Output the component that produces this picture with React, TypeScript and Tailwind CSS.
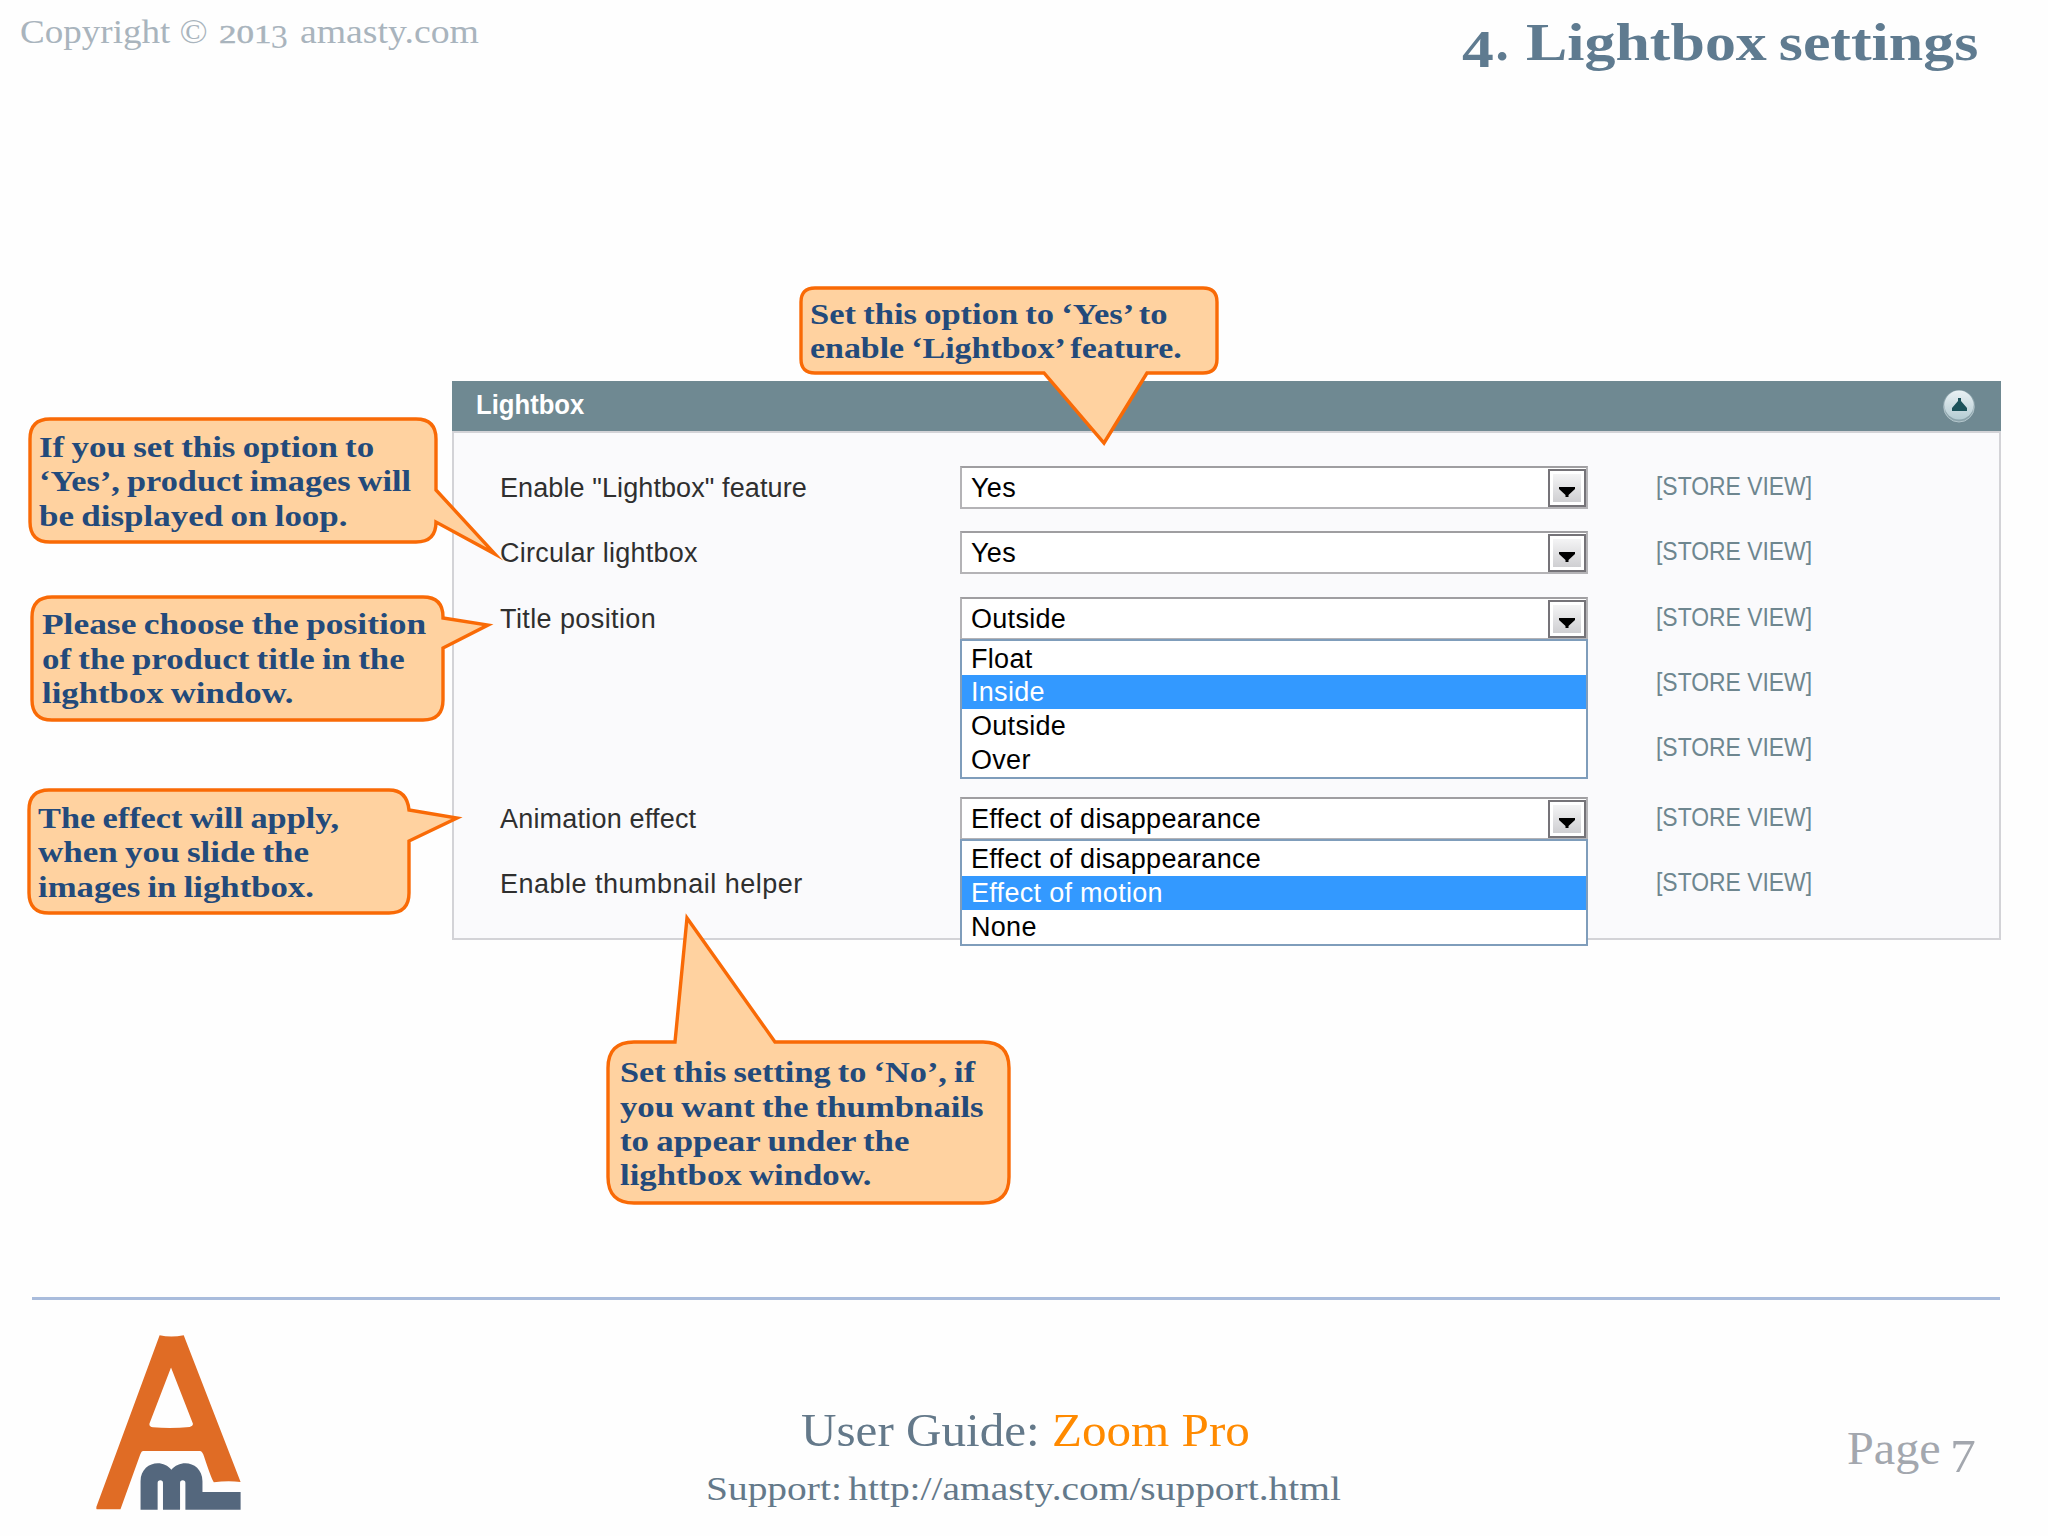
import React from "react";

const styles = {
  serif: `font-[Georgia,'Liberation_Serif',serif]`,
  sans: `font-[Arial,'Liberation_Sans',sans-serif]`,
  fit: `block w-max origin-left whitespace-pre`,
};

const rows: any[] = [
  { label: 'Enable "Lightbox" feature', track: "tracking-[0.1px]", value: "Yes", height: "h-[65.3px]" },
  { label: "Circular lightbox", track: "tracking-[0.25px]", value: "Yes", height: "h-[65.3px]" },
  {
    label: "Title position",
    track: "tracking-[0.4px]",
    value: "Outside",
    height: "h-[65.3px]",
    options: ["Float", "Inside", "Outside", "Over"],
    active: "Inside",
  },
  { height: "h-[65.3px]" },
  { height: "h-[70px]" },
  {
    label: "Animation effect",
    track: "tracking-[0.2px]",
    value: "Effect of disappearance",
    height: "h-[65.3px]",
    options: ["Effect of disappearance", "Effect of motion", "None"],
    active: "Effect of motion",
  },
  { label: "Enable thumbnail helper", track: "tracking-[0.5px]", height: "h-[43px]" },
];

// path is in the bubble's own coordinates, the tail may leave the box
const callouts: any[] = [
  {
    box: "left-[800px] top-[287px] w-[418px] h-[87px] pl-[9.5px] pt-[9.7px]",
    path: "M15 1H403Q417 1 417 15V72Q417 86 403 86H347L304 156L244 86H15Q1 86 1 72V15Q1 1 15 1Z",
    lines: [
      ["Set this option to ‘Yes’ to", "scale-x-[1.15]"],
      ["enable ‘Lightbox’ feature.", "scale-x-[1.13]"],
    ],
  },
  {
    box: "left-[29px] top-[418px] w-[408px] h-[125px] pl-[10px] pt-[11.7px]",
    path: "M21 1H387Q407 1 407 21V72L466 136L407 104Q407 124 387 124H21Q1 124 1 104V21Q1 1 21 1Z",
    lines: [
      ["If you set this option to", "scale-x-[1.163]"],
      ["‘Yes’, product images will", "scale-x-[1.142]"],
      ["be displayed on loop.", "scale-x-[1.165]"],
    ],
  },
  {
    box: "left-[31px] top-[595.5px] w-[413px] h-[125px] pl-[11px] pt-[11.7px]",
    path: "M21 1H392Q412 1 412 21V22L457 29L412 52V104Q412 124 392 124H21Q1 124 1 104V21Q1 1 21 1Z",
    lines: [
      ["Please choose the position", "scale-x-[1.18]"],
      ["of the product title in the", "scale-x-[1.16]"],
      ["lightbox window.", "scale-x-[1.157]"],
    ],
  },
  {
    box: "left-[28px] top-[789px] w-[382px] h-[125px] pl-[10px] pt-[11.7px]",
    path: "M21 1H361Q379 1 381 21L429 29L381 52V104Q381 124 361 124H21Q1 124 1 104V21Q1 1 21 1Z",
    lines: [
      ["The effect will apply,", "scale-x-[1.145]"],
      ["when you slide the", "scale-x-[1.167]"],
      ["images in lightbox.", "scale-x-[1.157]"],
    ],
  },
  {
    box: "left-[607px] top-[1041px] w-[403px] h-[163px] pl-[13px] pt-[14.2px]",
    path: "M27 1H68L80 -123L168 1H376Q402 1 402 27V136Q402 162 376 162H27Q1 162 1 136V27Q1 1 27 1Z",
    lines: [
      ["Set this setting to ‘No’, if", "scale-x-[1.143]"],
      ["you want the thumbnails", "scale-x-[1.158]"],
      ["to appear under the", "scale-x-[1.16]"],
      ["lightbox window.", "scale-x-[1.158]"],
    ],
  },
];

const Callout = ({ box, path, lines }: any) => (
  <div className={`absolute ${box} ${styles.serif} text-[30px] leading-[34.4px] font-bold text-[#234a7b] [word-spacing:-1.2px]`}>
    <svg className="absolute left-0 top-0 size-full overflow-visible" fill="#ffd2a0" stroke="#f96a06" strokeWidth="3.4" strokeMiterlimit="10">
      <path d={path} />
    </svg>
    {lines.map(([text, scale]: any) => (
      <span key={text} className={`relative ${styles.fit} ${scale}`}>{text}</span>
    ))}
  </div>
);

const Select = ({ value, options, active }: any) => (
  <div className="relative w-[628px] h-[43px] border-2 border-[#b4b3b6] border-t-[#9f9ea1] bg-white flex justify-between text-black">
    <span className="pl-[9px] leading-[41px] tracking-[0.3px]">{value}</span>
    <span className="w-[38px] h-[38px] mt-px border-2 border-[#757378] bg-white p-[3px] flex">
      <span className="flex-1 bg-linear-to-b from-[#f4f4f5] to-[#cfcfd2] flex justify-center items-end pb-[5px]">
        <svg width="16" height="10" viewBox="0 0 16 10"><path d="M0 0H16V2L9.5 8V10H6.5V8L0 2Z" /></svg>
      </span>
    </span>
    {options && (
      <ul className="absolute z-10 -left-[2px] top-[40px] w-[628px] border-2 border-[#7f9dbb] bg-white pt-px">
        {options.map((o: string) => (
          <li key={o} className={`pl-[9px] h-[33.8px] leading-[35px] tracking-[0.3px] ${o === active ? "bg-[#3399ff] text-white" : ""}`}>{o}</li>
        ))}
      </ul>
    )}
  </div>
);

const Logo = () => (
  <svg width="145" height="175" viewBox="288 166 433 523" className="block">
    <path
      fill="#e06c25"
      fillRule="evenodd"
      d="M478 167Q512 174 550 167L720 605Q680 601 640 606Q634 600 611 530Q606 513 598 513H428Q424 513 420 523L361 687H290Q287 683 291 674ZM512 263L448 430Q445 440 458 442Q512 447 568 441Q580 438 577 430Z"
    />
    <path
      fill="#54677d"
      d="M421 688V603C421 547 486 533 513 569C542 533 606 547 606 603V635H720V688H555V608Q555 600 547 600Q539 600 539 608V688H488V608Q488 600 480 600Q472 600 472 608V688Z"
    />
  </svg>
);

const App = () => {
  return (
    <div className={`relative w-[2048px] h-[1536px] overflow-hidden bg-[#fefefe] flex flex-col ${styles.serif}`}>

      <header className="h-[381px] pt-[11.5px] pl-[20px] pr-[69px] flex justify-between">
        <div className="flex text-[34px] leading-[40px] text-[#a9b4bd]">
          <span className={`${styles.fit} scale-x-[1.09]`}>Copyright ©</span>
          <span className="ml-[27px] flex">
            <span className={`${styles.fit} text-[25px] leading-[46px] scale-x-[1.4] [-webkit-text-stroke:0.4px_#a9b4bd]`}>201</span>
            <span className={`${styles.fit} relative top-[5px] ml-[14px]`}>3</span>
          </span>
          <span className={`${styles.fit} ml-[12px] scale-x-[1.11]`}>amasty.com</span>
        </div>
        <h1 className="w-[517px] flex text-[53px] leading-[60px] font-bold text-[#5f7b90]">
          <span className={`${styles.fit} relative top-[7px] scale-x-[1.2]`}>4</span>
          <span className="ml-[7px] w-[30px]">.</span>
          <span className={`${styles.fit} scale-x-[1.168] [word-spacing:-3px]`}>Lightbox settings</span>
        </h1>
      </header>

      <main className={`ml-[452px] w-[1549px] h-[559px] ${styles.sans} text-[27px] text-[#2f2f2f]`}>
        <div className="h-[49.5px] bg-[#6f8992] pl-[24px] pr-[26px] flex items-center justify-between">
          <span className={`${styles.fit} pb-px font-bold text-white scale-x-[0.95]`}>Lightbox</span>
          <svg width="32" height="34" viewBox="0 0 32 34">
            <defs>
              <linearGradient id="knob" x1="0" y1="0" x2="0" y2="1">
                <stop offset="0" stopColor="#e9f1f4" />
                <stop offset="1" stopColor="#b5ccd3" />
              </linearGradient>
            </defs>
            <circle cx="16" cy="17" r="16" fill="#8ba3ab" />
            <circle cx="16" cy="18" r="15" fill="none" stroke="#b4c6cc" strokeWidth="1" />
            <circle cx="16" cy="16" r="14.5" fill="url(#knob)" />
            <path d="M15 9H18V12L24 19V22H9V19L15 12Z" fill="#1c525a" />
          </svg>
        </div>
        <div className="h-[509.5px] border-2 border-[#d3d3d7] bg-[#fafafc] pt-[33.5px] pl-[46px]">
          {rows.map((row, i) => (
            <div key={i} className={`flex ${row.height}`}>
              <span className={`w-[460px] leading-[45px] ${row.track || ""}`}>{row.label}</span>
              <div className="w-[696px]">{row.value && <Select {...row} />}</div>
              <span className={`${styles.fit} text-[25px] leading-[41px] text-[#6e868f] scale-x-[0.916]`}>[STORE VIEW]</span>
            </div>
          ))}
        </div>
      </main>

      {callouts.map((c, i) => (
        <Callout key={i} {...c} />
      ))}

      <footer className="mt-[357px] ml-[32px] w-[1968px] border-t-[3px] border-[#a9bcdc] flex items-start">
        <div className="ml-[64px] mt-[35px] w-[610px]">
          <Logo />
        </div>
        <div className="w-[1141px] pt-[100px] text-[#64798a]">
          <p className="ml-[95px] text-[47px] leading-[60px]">
            <span className={`${styles.fit} scale-x-[1.045]`}>User Guide: <span className="text-[#ff8a00]">Zoom Pro</span></span>
          </p>
          <p className="mt-[5px] text-[34px] leading-[48px]">
            <span className={`${styles.fit} scale-x-[1.16] [word-spacing:-3px]`}>Support: http://amasty.com/support.html</span>
          </p>
        </div>
        <div className="pt-[118px] flex text-[47px] leading-[60px] text-[#a3a7ae]">
          <span className={`${styles.fit} scale-x-[1.025]`}>Page</span>
          <span className={`${styles.fit} relative top-[8px] ml-[12px] scale-x-[1.1]`}>7</span>
        </div>
      </footer>

    </div>
  );
};

export default App;
